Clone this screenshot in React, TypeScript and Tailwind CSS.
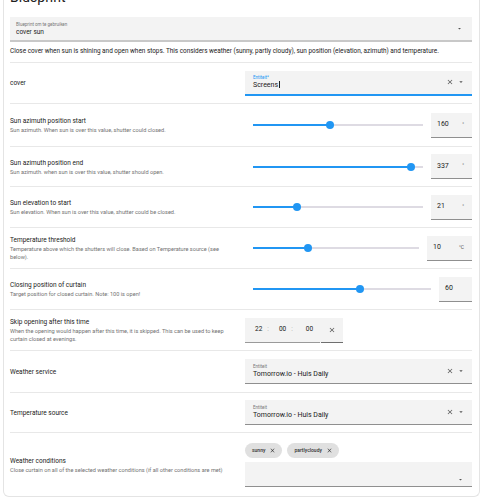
import React from 'react';

const font = { fontFamily: 'Roboto, "Liberation Sans", sans-serif' };

const ClearIcon = ({ className = '' }: { className?: string }) => (
  <svg viewBox="0 0 24 24" className={className} fill="currentColor">
    <path d="M19 6.41 17.59 5 12 10.59 6.41 5 5 6.41 10.59 12 5 17.59 6.41 19 12 13.41 17.59 19 19 17.59 13.41 12z" />
  </svg>
);

const Caret = ({ className = '' }: { className?: string }) => (
  <svg viewBox="0 0 24 24" className={className} fill="currentColor">
    <path d="M7 10l5 5 5-5z" />
  </svg>
);

const Row = ({ title, desc, h, children }: any) => (
  <div className={`flex items-center border-t border-[#e8e8e8] ${h}`}>
    <div className="w-[235px] shrink-0 pr-4">
      <div className="text-[6.5px] leading-[10px] text-[#212121]">{title}</div>
      {desc && <div className="text-[5.6px] leading-[8px] text-[#727272]">{desc}</div>}
    </div>
    <div className="flex-1 min-w-0">{children}</div>
  </div>
);

const Slider = ({ pct }: { pct: number }) => (
  <div className="relative h-[8px] ml-2">
    <div className="absolute left-0 right-0 top-[3px] h-[2px] bg-[#dedbe3]" />
    <div className="absolute left-0 top-[3px] h-[2px] bg-[#2196f3]" style={{ width: `${pct}%` }} />
    <div
      className="absolute top-0 w-[8px] h-[8px] -ml-[4px] rounded-full bg-[#2196f3]"
      style={{ left: `${pct}%` }}
    />
  </div>
);

const NumField = ({ value, unit, w }: { value: string; unit?: string; w: string }) => (
  <div className={`${w} h-[25px] bg-[#f3f3f3] border-b border-[#8f8f8f] flex items-center justify-between pl-[6px] pr-[8px] shrink-0`}>
    <span className="text-[7px] text-[#212121]">{value}</span>
    {unit && <span className="text-[5px] text-[#555]">{unit}</span>}
  </div>
);

const SliderRow = ({ pct, value, unit, w }: any) => (
  <div className="flex items-center gap-2">
    <div className="flex-1">
      <Slider pct={pct} />
    </div>
    <NumField value={value} unit={unit} w={w} />
  </div>
);

const Entity = ({ label, value, focused }: { label: string; value: string; focused?: boolean }) => (
  <div
    className={`h-[25px] bg-[#f3f3f3] flex items-center pl-[8px] pr-[7px] ${
      focused ? 'border-b-2 border-[#2196f3]' : 'border-b border-[#8f8f8f]'
    }`}
  >
    <div className="flex-1 flex flex-col justify-center">
      <span className={`text-[4.5px] leading-[6px] ${focused ? 'text-[#2196f3]' : 'text-[#777]'}`}>{label}</span>
      <span className="text-[7px] leading-[9px] text-[#212121]">
        {value}
        {focused && <span className="inline-block w-px h-[7px] bg-[#212121] align-middle ml-px" />}
      </span>
    </div>
    <ClearIcon className="w-[8px] h-[8px] text-[#555] mr-[3px]" />
    <Caret className="w-[8px] h-[8px] text-[#555]" />
  </div>
);

const Chip = ({ label }: { label: string }) => (
  <span className="h-[15px] rounded-full bg-[#e0e0e0] flex items-center gap-[4px] pl-[7px] pr-[6px] text-[5px] font-medium text-[#333]">
    {label}
    <ClearIcon className="w-[7px] h-[7px] text-[#444]" />
  </span>
);

export default function App() {
  return (
    <div className="w-[483px] h-[500px] overflow-hidden bg-white" style={font}>
      <div className="flow-root mx-[3px] h-[497px] border-x border-b border-[#e4e4e4] rounded-b-[6px] pl-[6px] pr-[7px]">
        <div className="-mt-[11px] text-[14px] leading-[16px] text-[#212121]">Blueprint</div>
        <div className="mt-[12px] h-[25px] bg-[#f3f3f3] border-b-2 border-[#c8c8c8] flex items-center pl-[6px] pr-[9px]">
          <div className="flex-1 flex flex-col">
            <span className="text-[4.5px] leading-[6px] text-[#777]">Blueprint om te gebruiken</span>
            <span className="text-[6.5px] leading-[8px] text-[#212121]">cover sun</span>
          </div>
          <Caret className="w-[7px] h-[7px] text-[#555]" />
        </div>
        <div className="h-[20px] flex items-center text-[6.4px] text-[#212121]">
          Close cover when sun is shining and open when stops. This considers weather (sunny, partly cloudy), sun position (elevation, azimuth) and temperature.
        </div>

        <Row title="cover" h="h-[41px]">
          <Entity label="Entiteit*" value="Screens" focused />
        </Row>
        <Row
          title="Sun azimuth position start"
          desc="Sun azimuth. When sun is over this value, shutter could closed."
          h="h-[43px]"
        >
          <SliderRow pct={45} value="160" unit="°" w="w-[41px]" />
        </Row>
        <Row
          title="Sun azimuth position end"
          desc="Sun azimuth. when sun is over this value, shutter should open."
          h="h-[40px]"
        >
          <SliderRow pct={93} value="337" unit="°" w="w-[41px]" />
        </Row>
        <Row
          title="Sun elevation to start"
          desc="Sun elevation. When sun is over this value, shutter could be closed."
          h="h-[41px]"
        >
          <SliderRow pct={26} value="21" unit="°" w="w-[41px]" />
        </Row>
        <Row
          title="Temperature threshold"
          desc="Temperature above which the shutters will close. Based on Temperature source (see below)."
          h="h-[41px]"
        >
          <SliderRow pct={33} value="10" unit="°C" w="w-[45px]" />
        </Row>
        <Row
          title="Closing position of curtain"
          desc="Target position for closed curtain. Note: 100 is open!"
          h="h-[41px]"
        >
          <SliderRow pct={60} value="60" w="w-[33px]" />
        </Row>
        <Row
          title="Skip opening after this time"
          desc="When the opening would happen after this time, it is skipped. This can be used to keep curtain closed at evenings."
          h="h-[41px]"
        >
          <div className="flex h-[25px] w-[98px] bg-[#f3f3f3] text-[6.5px] text-[#212121]">
            <div className="flex items-center w-[75px] border-b border-[#9a9a9a] pl-[10px]">
              <span>22</span>
              <span className="ml-[5px] text-[#aaa]">:</span>
              <span className="ml-[10px]">00</span>
              <span className="ml-[5px] text-[#aaa]">:</span>
              <span className="ml-[13px]">00</span>
            </div>
            <div className="flex-1 flex items-center justify-center border-b border-[#6f6f6f] ml-px">
              <ClearIcon className="w-[8px] h-[8px] text-[#555]" />
            </div>
          </div>
        </Row>
        <Row title="Weather service" h="h-[42px]">
          <Entity label="Entiteit" value="Tomorrow.io - Huis Daily" />
        </Row>
        <Row title="Temperature source" h="h-[40px]">
          <Entity label="Entiteit" value="Tomorrow.io - Huis Daily" />
        </Row>
        <Row
          title="Weather conditions"
          desc="Close curtain on all of the selected weather conditions (if all other conditions are met)"
          h="h-[65px]"
        >
          <div className="flex flex-col">
            <div className="flex gap-[5px] mb-[4px]">
              <Chip label="sunny" />
              <Chip label="partlycloudy" />
            </div>
            <div className="h-[25px] bg-[#f3f3f3] border-b border-[#8f8f8f] flex items-end justify-end pr-[8px] pb-[3px]">
              <Caret className="w-[7px] h-[7px] text-[#555]" />
            </div>
          </div>
        </Row>
      </div>
    </div>
  );
}
